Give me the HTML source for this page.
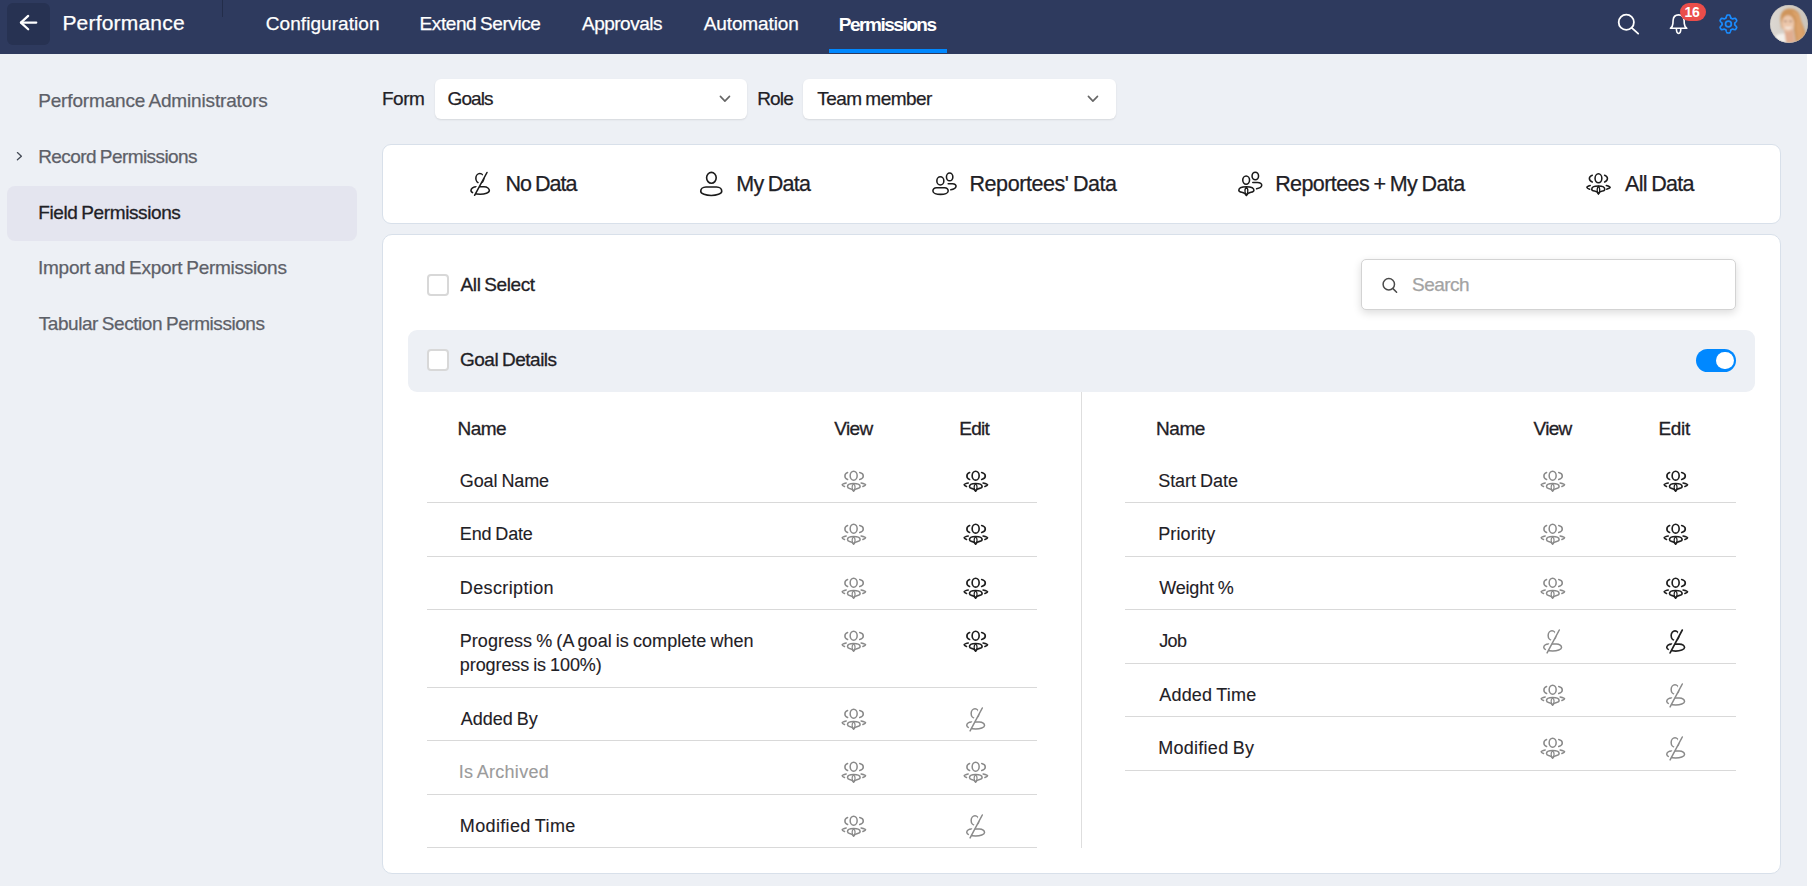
<!DOCTYPE html>
<html><head><meta charset="utf-8"><title>Performance - Permissions</title>
<style>
html,body{margin:0;padding:0;}
body{width:1812px;height:886px;overflow:hidden;position:relative;background:#ffffff;font-family:"Liberation Sans",sans-serif;}
.bg{position:absolute;left:0;top:54px;width:1807px;height:832px;background:#edf0f5;}
.hdr{position:absolute;left:0;top:0;width:1812px;height:54px;background:#2e3a5e;}
.t{position:absolute;white-space:pre;}
.ic{position:absolute;overflow:visible;}
.box{position:absolute;box-sizing:border-box;}
</style></head>
<body>
<div class="bg"></div>
<div class="hdr"></div>
<!-- back button -->
<div class="box" style="left:7px;top:3px;width:43px;height:42px;background:#273252;border-radius:6px;"></div>
<svg class="ic" style="left:15px;top:10px" width="28" height="28" viewBox="0 0 28 28" fill="none" stroke="#fff" stroke-width="2.2" stroke-linecap="round" stroke-linejoin="round">
<path d="M6 12.6H21.3"/><path d="M13.2 5.9L5.9 12.6L13.2 19.3"/></svg>
<div class="box" style="left:222px;top:0;width:1px;height:17px;background:#232d4a;"></div>
<!-- nav underline -->
<div class="box" style="left:829px;top:49px;width:118px;height:4px;background:#0088ff;"></div>
<!-- header right icons -->
<svg class="ic" style="left:1614px;top:10px" width="28" height="28" viewBox="0 0 28 28" fill="none" stroke="#fff" stroke-width="1.8" stroke-linecap="round">
<circle cx="12.3" cy="12.2" r="7.6"/><path d="M17.8 17.8L24.2 23.6"/></svg>
<svg class="ic" style="left:1666px;top:11px" width="26" height="26" viewBox="0 0 26 26" fill="none" stroke="#fff" stroke-width="1.6" stroke-linejoin="round">
<path d="M4.4 17.3C5.8 16.2 6.8 14.8 6.9 12.6L7.1 9.4C7.3 5.8 9.4 3.9 12.6 3.9C15.8 3.9 17.9 5.8 18.1 9.4L18.3 12.6C18.4 14.8 19.4 16.2 20.8 17.3Z"/>
<path d="M10.4 17.6C10.4 20.9 11.4 22.5 12.6 22.5C13.8 22.5 14.8 20.9 14.8 17.6"/></svg>
<div class="box" style="left:1680px;top:3px;width:26px;height:18px;background:#ea4d4a;border-radius:9px;"></div>
<div class="t" style="left:1684.6px;top:2.6px;font-size:14px;line-height:18px;font-weight:bold;color:#fff;letter-spacing:-0.4px;">16</div>
<svg class="ic" style="left:1712px;top:8px" width="34" height="34" viewBox="1712 8 34 34" fill="none" stroke="#1a8cff" stroke-width="1.7" stroke-linejoin="round">
<path d="M1734.80 24.00 L1734.80 23.83 L1734.79 23.67 L1734.78 23.50 L1734.76 23.33 L1734.75 23.16 L1734.87 22.97 L1735.10 22.76 L1735.34 22.52 L1735.59 22.27 L1735.84 22.01 L1736.08 21.73 L1736.30 21.43 L1736.49 21.13 L1736.66 20.83 L1736.71 20.56 L1736.62 20.34 L1736.52 20.13 L1736.42 19.91 L1736.31 19.71 L1736.19 19.50 L1736.07 19.30 L1735.95 19.10 L1735.82 18.90 L1735.68 18.71 L1735.54 18.52 L1735.27 18.43 L1734.93 18.42 L1734.57 18.44 L1734.21 18.49 L1733.84 18.56 L1733.49 18.64 L1733.15 18.73 L1732.83 18.82 L1732.52 18.91 L1732.30 18.92 L1732.16 18.82 L1732.02 18.73 L1731.89 18.63 L1731.74 18.54 L1731.60 18.46 L1731.45 18.38 L1731.31 18.30 L1731.16 18.22 L1731.00 18.15 L1730.85 18.09 L1730.75 17.88 L1730.67 17.58 L1730.59 17.25 L1730.50 16.91 L1730.39 16.56 L1730.27 16.22 L1730.13 15.88 L1729.96 15.56 L1729.78 15.26 L1729.57 15.08 L1729.34 15.05 L1729.11 15.03 L1728.87 15.01 L1728.64 15.00 L1728.40 15.00 L1728.16 15.00 L1727.93 15.01 L1727.69 15.03 L1727.46 15.05 L1727.23 15.08 L1727.02 15.26 L1726.84 15.56 L1726.67 15.88 L1726.53 16.22 L1726.41 16.56 L1726.30 16.91 L1726.21 17.25 L1726.13 17.58 L1726.05 17.88 L1725.95 18.09 L1725.80 18.15 L1725.64 18.22 L1725.49 18.30 L1725.35 18.38 L1725.20 18.46 L1725.06 18.54 L1724.91 18.63 L1724.78 18.73 L1724.64 18.82 L1724.50 18.92 L1724.28 18.91 L1723.97 18.82 L1723.65 18.73 L1723.31 18.64 L1722.96 18.56 L1722.59 18.49 L1722.23 18.44 L1721.87 18.42 L1721.53 18.43 L1721.26 18.52 L1721.12 18.71 L1720.98 18.90 L1720.85 19.10 L1720.73 19.30 L1720.61 19.50 L1720.49 19.71 L1720.38 19.91 L1720.28 20.13 L1720.18 20.34 L1720.09 20.56 L1720.14 20.83 L1720.31 21.13 L1720.50 21.43 L1720.72 21.73 L1720.96 22.01 L1721.21 22.27 L1721.46 22.52 L1721.70 22.76 L1721.93 22.97 L1722.05 23.16 L1722.04 23.33 L1722.02 23.50 L1722.01 23.67 L1722.00 23.83 L1722.00 24.00 L1722.00 24.17 L1722.01 24.33 L1722.02 24.50 L1722.04 24.67 L1722.05 24.84 L1721.93 25.03 L1721.70 25.24 L1721.46 25.48 L1721.21 25.73 L1720.96 25.99 L1720.72 26.27 L1720.50 26.57 L1720.31 26.87 L1720.14 27.17 L1720.09 27.44 L1720.18 27.66 L1720.28 27.87 L1720.38 28.09 L1720.49 28.29 L1720.61 28.50 L1720.73 28.70 L1720.85 28.90 L1720.98 29.10 L1721.12 29.29 L1721.26 29.48 L1721.53 29.57 L1721.87 29.58 L1722.23 29.56 L1722.59 29.51 L1722.96 29.44 L1723.31 29.36 L1723.65 29.27 L1723.97 29.18 L1724.28 29.09 L1724.50 29.08 L1724.64 29.18 L1724.78 29.27 L1724.91 29.37 L1725.06 29.46 L1725.20 29.54 L1725.35 29.62 L1725.49 29.70 L1725.64 29.78 L1725.80 29.85 L1725.95 29.91 L1726.05 30.12 L1726.13 30.42 L1726.21 30.75 L1726.30 31.09 L1726.41 31.44 L1726.53 31.78 L1726.67 32.12 L1726.84 32.44 L1727.02 32.74 L1727.23 32.92 L1727.46 32.95 L1727.69 32.97 L1727.93 32.99 L1728.16 33.00 L1728.40 33.00 L1728.64 33.00 L1728.87 32.99 L1729.11 32.97 L1729.34 32.95 L1729.57 32.92 L1729.78 32.74 L1729.96 32.44 L1730.13 32.12 L1730.27 31.78 L1730.39 31.44 L1730.50 31.09 L1730.59 30.75 L1730.67 30.42 L1730.75 30.12 L1730.85 29.91 L1731.00 29.85 L1731.16 29.78 L1731.31 29.70 L1731.45 29.62 L1731.60 29.54 L1731.74 29.46 L1731.89 29.37 L1732.02 29.27 L1732.16 29.18 L1732.30 29.08 L1732.52 29.09 L1732.83 29.18 L1733.15 29.27 L1733.49 29.36 L1733.84 29.44 L1734.21 29.51 L1734.57 29.56 L1734.93 29.58 L1735.27 29.57 L1735.54 29.48 L1735.68 29.29 L1735.82 29.10 L1735.95 28.90 L1736.07 28.70 L1736.19 28.50 L1736.31 28.29 L1736.42 28.09 L1736.52 27.87 L1736.62 27.66 L1736.71 27.44 L1736.66 27.17 L1736.49 26.87 L1736.30 26.57 L1736.08 26.27 L1735.84 25.99 L1735.59 25.73 L1735.34 25.48 L1735.10 25.24 L1734.87 25.03 L1734.75 24.84 L1734.76 24.67 L1734.78 24.50 L1734.79 24.33 L1734.80 24.17Z"/>
<circle cx="1728.4" cy="24" r="2.9"/></svg>
<!-- avatar -->
<svg class="ic" style="left:1770px;top:5px" width="38" height="38" viewBox="0 0 38 38">
<defs><clipPath id="avc"><circle cx="19" cy="19" r="19"/></clipPath>
<filter id="avb" x="-20%" y="-20%" width="140%" height="140%"><feGaussianBlur stdDeviation="1"/></filter>
<linearGradient id="avg" x1="0" y1="0" x2="1" y2="0"><stop offset="0" stop-color="#dcd8d2"/><stop offset="1" stop-color="#cbc4bb"/></linearGradient></defs>
<g clip-path="url(#avc)">
<rect x="0" y="0" width="38" height="38" fill="url(#avg)"/>
<g filter="url(#avb)">
<path d="M10.5 15C10 7 14.5 3.5 19.5 3.5C25 3.5 29 6.5 30 11.5C31 17 35 24 36 30L35 38H26L24 25C24 18 23 13 19.5 11C16 11.5 13.5 15 13 20L12.5 25C11 22 10.7 18.5 10.5 15Z" fill="#cf955c"/>
<path d="M3 38L5.5 31C9 28.5 13 28 16 29L19 38Z" fill="#f3f0eb"/>
<path d="M14 23C16.5 27 20 27 23 23L25 38H16Z" fill="#e0ad90"/>
<ellipse cx="18" cy="18.5" rx="6.3" ry="8.3" fill="#ecc7ab"/>
<path d="M14.2 16.3h2.4M19.4 16.3h2.4" stroke="#7a5544" stroke-width="1"/>
<path d="M15.4 22.2Q18.2 24.2 21 22.2" stroke="#fbf6f3" stroke-width="1.5" fill="none"/>
<path d="M22.5 8C26 10.5 27.5 15 26 20C25.5 26 28 32 27 38H35C35 30 32 22 30.5 14.5C29.5 9.5 27 7 22.5 6Z" fill="#dca36c"/>
</g></g>
<circle cx="19" cy="19" r="18.6" fill="none" stroke="#b7b2ad" stroke-width="0.6" opacity="0.6"/>
</svg>

<!-- sidebar -->
<div class="box" style="left:7px;top:186px;width:350px;height:55px;background:#e4e5ef;border-radius:8px;"></div>
<svg class="ic" style="left:14px;top:150px" width="12" height="12" viewBox="0 0 12 12" fill="none" stroke="#444a55" stroke-width="1.3" stroke-linecap="round" stroke-linejoin="round">
<path d="M3.4 2.6L7.4 6.3L3.4 9.8"/></svg>

<!-- form / role dropdowns -->
<div class="box" style="left:435px;top:79px;width:312px;height:40px;background:#fff;border-radius:6px;box-shadow:0 1px 2px rgba(0,0,0,0.10);"></div>
<div class="box" style="left:803px;top:79px;width:313px;height:40px;background:#fff;border-radius:6px;box-shadow:0 1px 2px rgba(0,0,0,0.10);"></div>
<svg class="ic" style="left:717px;top:92px" width="16" height="14" viewBox="0 0 16 14" fill="none" stroke="#666666" stroke-width="1.6" stroke-linecap="round" stroke-linejoin="round">
<path d="M3.4 4.4L7.9 9.1L12.5 4.4"/></svg>
<svg class="ic" style="left:1085px;top:92px" width="16" height="14" viewBox="0 0 16 14" fill="none" stroke="#666666" stroke-width="1.6" stroke-linecap="round" stroke-linejoin="round">
<path d="M3.4 4.4L7.9 9.1L12.5 4.4"/></svg>

<!-- tabs box -->
<div class="box" style="left:382px;top:144px;width:1399px;height:80px;background:#fff;border:1px solid #d8e0ea;border-radius:9px;"></div>
<!-- main card -->
<div class="box" style="left:382px;top:234px;width:1399px;height:640px;background:#fff;border:1px solid #d8e0ea;border-radius:10px;"></div>

<!-- tab icons -->
<svg class="ic" style="left:466px;top:168px" width="30" height="32" viewBox="466 168 30 32" fill="none" stroke="#1b1b1b" stroke-width="1.55" stroke-linecap="round">
<ellipse cx="479.85" cy="178.3" rx="4" ry="4.85"/>
<path d="M476.5 186.75H484C487.4 186.75 489.35 188.8 489.35 190.6C489.35 192.9 484.8 194.25 480.15 194.25C475.5 194.25 470.95 192.9 470.95 190.6C470.95 188.6 473.3 186.75 476.5 186.75Z"/>
<path d="M486.7 170.6L473.3 195.4" stroke="#fff" stroke-width="2.8" stroke-linecap="butt"/>
<path d="M487 172.5L474.6 195.3"/>
</svg>
<svg class="ic" style="left:690px;top:160px" width="40" height="40" viewBox="690 160 40 40" fill="none" stroke="#1b1b1b" stroke-width="1.6">
<ellipse cx="711.4" cy="177.8" rx="4.8" ry="5.4"/>
<path d="M706 187.05H716.5C720 187.05 721.75 189.3 721.75 191.3C721.75 193.8 716.6 195.55 711.25 195.55C705.9 195.55 700.75 193.8 700.75 191.3C700.75 189.3 702.5 187.05 706 187.05Z"/>
</svg>
<svg class="ic" style="left:928px;top:168px" width="34" height="32" viewBox="928 168 34 32" fill="none" stroke="#1b1b1b" stroke-width="1.55" stroke-linecap="round">
<ellipse cx="940.35" cy="180.9" rx="3.5" ry="4.1"/>
<ellipse cx="949.65" cy="176.9" rx="3.2" ry="3.9"/>
<path d="M936.5 187.7H944.6C947 187.7 948.2 189.6 948.2 191C948.2 193 944.6 194.35 940.55 194.35C936.5 194.35 932.9 193 932.9 191C932.9 189.6 934.1 187.7 936.5 187.7Z"/>
<path d="M948.2 183.7H952.4C957.6 183.9 957.4 188.8 950.8 189.8"/>
</svg>
<svg class="ic" style="left:1234px;top:168px" width="34" height="32" viewBox="1234 168 34 32" fill="none" stroke="#1b1b1b" stroke-width="1.55" stroke-linecap="round" stroke-linejoin="round">
<ellipse cx="1246.15" cy="180.1" rx="3.4" ry="4.15"/>
<ellipse cx="1255.3" cy="175.95" rx="3.25" ry="3.8"/>
<path d="M1252.8 182.5H1257.4C1263.4 182.7 1263.2 187.6 1256.6 188.8"/>
<path d="M1246.4 195.4C1245.8 193.8 1244 192.5 1241.8 192.2C1239.9 191.9 1238.8 191.2 1238.8 190.2C1238.8 188 1242 186.75 1246.4 186.75C1250.8 186.75 1253.9 188 1253.9 190.2C1253.9 191.2 1252.9 191.9 1251 192.2C1248.8 192.5 1247 193.8 1246.4 195.4Z"/>
<path d="M1246.4 186.9C1244.5 189 1244.5 193.2 1246.4 195.2C1248.3 193.2 1248.3 189 1246.4 186.9Z" stroke-width="1.3"/>
</svg>
<svg class="ic" style="left:1582px;top:168px" width="34" height="32" viewBox="1582 168 34 32" fill="none" stroke="#1b1b1b" stroke-width="1.55" stroke-linecap="round" stroke-linejoin="round">
<ellipse cx="1598.45" cy="178.3" rx="3.4" ry="4.5"/>
<path d="M1592.3 175.2C1588.4 176.6 1588.4 180.6 1592.3 182"/><path d="M1604.6 175.2C1608.4 176.6 1608.4 180.6 1604.6 182"/>
<path d="M1590.2 185.6C1588.6 186 1586.9 186.9 1586.9 187.5C1587 188.2 1588.4 188.8 1589.6 189.2"/>
<path d="M1606.3 185.6C1607.9 186 1610.15 186.9 1610.15 187.5C1610 188.2 1608 188.8 1606.8 189.2"/>
<path d="M1598.45 194C1597.9 192.6 1596.4 191.4 1594.5 191.1C1592.7 190.8 1591.75 190.1 1591.75 189.2C1591.75 187.2 1594.8 186.05 1598.45 186.05C1602.1 186.05 1604.75 187.2 1604.75 189.2C1604.75 190.1 1604 190.8 1602.4 191.1C1600.5 191.4 1599 192.6 1598.45 194Z"/>
<path d="M1598.45 186.2C1596.7 188.2 1596.7 191.8 1598.45 193.8C1600.2 191.8 1600.2 188.2 1598.45 186.2Z" stroke-width="1.3"/>
</svg>

<!-- All select row -->
<div class="box" style="left:427px;top:274px;width:22px;height:22px;border:2px solid #d8d8d8;border-radius:4px;background:#fff;"></div>
<div class="box" style="left:1361px;top:259px;width:374.5px;height:51px;border:1px solid #d3d3d3;border-radius:5px;background:#fff;box-shadow:0 3px 8px rgba(0,0,0,0.14);"></div>
<svg class="ic" style="left:1378px;top:274px" width="24" height="24" viewBox="1378 274 24 24" fill="none" stroke="#4a4a4a" stroke-width="1.5" stroke-linecap="round">
<circle cx="1388.8" cy="284.2" r="5.7"/><path d="M1393 288.6L1396.6 292.2"/></svg>

<!-- Goal details section -->
<div class="box" style="left:408px;top:330px;width:1347px;height:62px;background:#edf0f5;border-radius:9px;"></div>
<div class="box" style="left:427px;top:348.5px;width:22px;height:22px;border:2px solid #d8d8d8;border-radius:4px;background:#fff;"></div>
<div class="box" style="left:1696px;top:349px;width:40px;height:23px;background:#0088ff;border-radius:12px;"></div>
<div class="box" style="left:1716.2px;top:351.8px;width:17.6px;height:17.6px;background:#fff;border-radius:50%;"></div>

<!-- table lines -->
<div class="box" style="left:1081px;top:392px;width:1px;height:456px;background:#dedede;"></div>
<div class="box" style="left:427px;top:502px;width:610px;height:1px;background:#d9d9d9;"></div>
<div class="box" style="left:427px;top:556px;width:610px;height:1px;background:#d9d9d9;"></div>
<div class="box" style="left:427px;top:609px;width:610px;height:1px;background:#d9d9d9;"></div>
<div class="box" style="left:427px;top:687px;width:610px;height:1px;background:#d9d9d9;"></div>
<div class="box" style="left:427px;top:740px;width:610px;height:1px;background:#d9d9d9;"></div>
<div class="box" style="left:427px;top:794px;width:610px;height:1px;background:#d9d9d9;"></div>
<div class="box" style="left:427px;top:847px;width:610px;height:1px;background:#d9d9d9;"></div>
<div class="box" style="left:1125px;top:502px;width:611px;height:1px;background:#d9d9d9;"></div>
<div class="box" style="left:1125px;top:556px;width:611px;height:1px;background:#d9d9d9;"></div>
<div class="box" style="left:1125px;top:609px;width:611px;height:1px;background:#d9d9d9;"></div>
<div class="box" style="left:1125px;top:663px;width:611px;height:1px;background:#d9d9d9;"></div>
<div class="box" style="left:1125px;top:716px;width:611px;height:1px;background:#d9d9d9;"></div>
<div class="box" style="left:1125px;top:770px;width:611px;height:1px;background:#d9d9d9;"></div>

<svg class="ic" style="left:841.2px;top:468.7px" width="26" height="24" viewBox="0 0 26 24" fill="none" stroke="#8a8a8a" stroke-width="1.5" stroke-linecap="round" stroke-linejoin="round">
<ellipse cx="12.65" cy="6.7" rx="3.5" ry="4.45"/>
<path d="M6.6 3.5C3 4.8 3 9.2 6.6 10.5"/><path d="M18.7 3.5C23.5 4.8 23.5 9.2 18.7 10.5"/>
<path d="M5.2 14C3.4 14.4 1.2 15.2 1.2 15.8C1.2 16.5 2.4 17.1 3.5 17.5"/><path d="M20.1 14C21.9 14.4 24.6 15.2 24.6 15.8C24.6 16.5 23 17.1 21.9 17.5"/>
<path d="M12.6 22.2C12 20.8 10.5 19.7 8.6 19.4C7.2 19.1 6.5 18.4 6.5 17.5C6.5 15.6 9.4 14.5 12.6 14.5C15.8 14.5 19.1 15.6 19.1 17.5C19.1 18.4 18.3 19.1 16.6 19.4C14.7 19.7 13.2 20.8 12.6 22.2Z"/>
<path d="M12.6 14.6C10.9 16.6 10.9 19.8 12.6 22C14.3 19.8 14.3 16.6 12.6 14.6Z" stroke-width="1.25"/>
</svg>
<svg class="ic" style="left:963.0px;top:468.7px" width="26" height="24" viewBox="0 0 26 24" fill="none" stroke="#1f1f1f" stroke-width="1.65" stroke-linecap="round" stroke-linejoin="round">
<ellipse cx="12.65" cy="6.7" rx="3.5" ry="4.45"/>
<path d="M6.6 3.5C3 4.8 3 9.2 6.6 10.5"/><path d="M18.7 3.5C23.5 4.8 23.5 9.2 18.7 10.5"/>
<path d="M5.2 14C3.4 14.4 1.2 15.2 1.2 15.8C1.2 16.5 2.4 17.1 3.5 17.5"/><path d="M20.1 14C21.9 14.4 24.6 15.2 24.6 15.8C24.6 16.5 23 17.1 21.9 17.5"/>
<path d="M12.6 22.2C12 20.8 10.5 19.7 8.6 19.4C7.2 19.1 6.5 18.4 6.5 17.5C6.5 15.6 9.4 14.5 12.6 14.5C15.8 14.5 19.1 15.6 19.1 17.5C19.1 18.4 18.3 19.1 16.6 19.4C14.7 19.7 13.2 20.8 12.6 22.2Z"/>
<path d="M12.6 14.6C10.9 16.6 10.9 19.8 12.6 22C14.3 19.8 14.3 16.6 12.6 14.6Z" stroke-width="1.25"/>
</svg>
<svg class="ic" style="left:841.2px;top:522.1px" width="26" height="24" viewBox="0 0 26 24" fill="none" stroke="#8a8a8a" stroke-width="1.5" stroke-linecap="round" stroke-linejoin="round">
<ellipse cx="12.65" cy="6.7" rx="3.5" ry="4.45"/>
<path d="M6.6 3.5C3 4.8 3 9.2 6.6 10.5"/><path d="M18.7 3.5C23.5 4.8 23.5 9.2 18.7 10.5"/>
<path d="M5.2 14C3.4 14.4 1.2 15.2 1.2 15.8C1.2 16.5 2.4 17.1 3.5 17.5"/><path d="M20.1 14C21.9 14.4 24.6 15.2 24.6 15.8C24.6 16.5 23 17.1 21.9 17.5"/>
<path d="M12.6 22.2C12 20.8 10.5 19.7 8.6 19.4C7.2 19.1 6.5 18.4 6.5 17.5C6.5 15.6 9.4 14.5 12.6 14.5C15.8 14.5 19.1 15.6 19.1 17.5C19.1 18.4 18.3 19.1 16.6 19.4C14.7 19.7 13.2 20.8 12.6 22.2Z"/>
<path d="M12.6 14.6C10.9 16.6 10.9 19.8 12.6 22C14.3 19.8 14.3 16.6 12.6 14.6Z" stroke-width="1.25"/>
</svg>
<svg class="ic" style="left:963.0px;top:522.1px" width="26" height="24" viewBox="0 0 26 24" fill="none" stroke="#1f1f1f" stroke-width="1.65" stroke-linecap="round" stroke-linejoin="round">
<ellipse cx="12.65" cy="6.7" rx="3.5" ry="4.45"/>
<path d="M6.6 3.5C3 4.8 3 9.2 6.6 10.5"/><path d="M18.7 3.5C23.5 4.8 23.5 9.2 18.7 10.5"/>
<path d="M5.2 14C3.4 14.4 1.2 15.2 1.2 15.8C1.2 16.5 2.4 17.1 3.5 17.5"/><path d="M20.1 14C21.9 14.4 24.6 15.2 24.6 15.8C24.6 16.5 23 17.1 21.9 17.5"/>
<path d="M12.6 22.2C12 20.8 10.5 19.7 8.6 19.4C7.2 19.1 6.5 18.4 6.5 17.5C6.5 15.6 9.4 14.5 12.6 14.5C15.8 14.5 19.1 15.6 19.1 17.5C19.1 18.4 18.3 19.1 16.6 19.4C14.7 19.7 13.2 20.8 12.6 22.2Z"/>
<path d="M12.6 14.6C10.9 16.6 10.9 19.8 12.6 22C14.3 19.8 14.3 16.6 12.6 14.6Z" stroke-width="1.25"/>
</svg>
<svg class="ic" style="left:841.2px;top:575.7px" width="26" height="24" viewBox="0 0 26 24" fill="none" stroke="#8a8a8a" stroke-width="1.5" stroke-linecap="round" stroke-linejoin="round">
<ellipse cx="12.65" cy="6.7" rx="3.5" ry="4.45"/>
<path d="M6.6 3.5C3 4.8 3 9.2 6.6 10.5"/><path d="M18.7 3.5C23.5 4.8 23.5 9.2 18.7 10.5"/>
<path d="M5.2 14C3.4 14.4 1.2 15.2 1.2 15.8C1.2 16.5 2.4 17.1 3.5 17.5"/><path d="M20.1 14C21.9 14.4 24.6 15.2 24.6 15.8C24.6 16.5 23 17.1 21.9 17.5"/>
<path d="M12.6 22.2C12 20.8 10.5 19.7 8.6 19.4C7.2 19.1 6.5 18.4 6.5 17.5C6.5 15.6 9.4 14.5 12.6 14.5C15.8 14.5 19.1 15.6 19.1 17.5C19.1 18.4 18.3 19.1 16.6 19.4C14.7 19.7 13.2 20.8 12.6 22.2Z"/>
<path d="M12.6 14.6C10.9 16.6 10.9 19.8 12.6 22C14.3 19.8 14.3 16.6 12.6 14.6Z" stroke-width="1.25"/>
</svg>
<svg class="ic" style="left:963.0px;top:575.7px" width="26" height="24" viewBox="0 0 26 24" fill="none" stroke="#1f1f1f" stroke-width="1.65" stroke-linecap="round" stroke-linejoin="round">
<ellipse cx="12.65" cy="6.7" rx="3.5" ry="4.45"/>
<path d="M6.6 3.5C3 4.8 3 9.2 6.6 10.5"/><path d="M18.7 3.5C23.5 4.8 23.5 9.2 18.7 10.5"/>
<path d="M5.2 14C3.4 14.4 1.2 15.2 1.2 15.8C1.2 16.5 2.4 17.1 3.5 17.5"/><path d="M20.1 14C21.9 14.4 24.6 15.2 24.6 15.8C24.6 16.5 23 17.1 21.9 17.5"/>
<path d="M12.6 22.2C12 20.8 10.5 19.7 8.6 19.4C7.2 19.1 6.5 18.4 6.5 17.5C6.5 15.6 9.4 14.5 12.6 14.5C15.8 14.5 19.1 15.6 19.1 17.5C19.1 18.4 18.3 19.1 16.6 19.4C14.7 19.7 13.2 20.8 12.6 22.2Z"/>
<path d="M12.6 14.6C10.9 16.6 10.9 19.8 12.6 22C14.3 19.8 14.3 16.6 12.6 14.6Z" stroke-width="1.25"/>
</svg>
<svg class="ic" style="left:841.2px;top:628.9px" width="26" height="24" viewBox="0 0 26 24" fill="none" stroke="#8a8a8a" stroke-width="1.5" stroke-linecap="round" stroke-linejoin="round">
<ellipse cx="12.65" cy="6.7" rx="3.5" ry="4.45"/>
<path d="M6.6 3.5C3 4.8 3 9.2 6.6 10.5"/><path d="M18.7 3.5C23.5 4.8 23.5 9.2 18.7 10.5"/>
<path d="M5.2 14C3.4 14.4 1.2 15.2 1.2 15.8C1.2 16.5 2.4 17.1 3.5 17.5"/><path d="M20.1 14C21.9 14.4 24.6 15.2 24.6 15.8C24.6 16.5 23 17.1 21.9 17.5"/>
<path d="M12.6 22.2C12 20.8 10.5 19.7 8.6 19.4C7.2 19.1 6.5 18.4 6.5 17.5C6.5 15.6 9.4 14.5 12.6 14.5C15.8 14.5 19.1 15.6 19.1 17.5C19.1 18.4 18.3 19.1 16.6 19.4C14.7 19.7 13.2 20.8 12.6 22.2Z"/>
<path d="M12.6 14.6C10.9 16.6 10.9 19.8 12.6 22C14.3 19.8 14.3 16.6 12.6 14.6Z" stroke-width="1.25"/>
</svg>
<svg class="ic" style="left:963.0px;top:628.9px" width="26" height="24" viewBox="0 0 26 24" fill="none" stroke="#1f1f1f" stroke-width="1.65" stroke-linecap="round" stroke-linejoin="round">
<ellipse cx="12.65" cy="6.7" rx="3.5" ry="4.45"/>
<path d="M6.6 3.5C3 4.8 3 9.2 6.6 10.5"/><path d="M18.7 3.5C23.5 4.8 23.5 9.2 18.7 10.5"/>
<path d="M5.2 14C3.4 14.4 1.2 15.2 1.2 15.8C1.2 16.5 2.4 17.1 3.5 17.5"/><path d="M20.1 14C21.9 14.4 24.6 15.2 24.6 15.8C24.6 16.5 23 17.1 21.9 17.5"/>
<path d="M12.6 22.2C12 20.8 10.5 19.7 8.6 19.4C7.2 19.1 6.5 18.4 6.5 17.5C6.5 15.6 9.4 14.5 12.6 14.5C15.8 14.5 19.1 15.6 19.1 17.5C19.1 18.4 18.3 19.1 16.6 19.4C14.7 19.7 13.2 20.8 12.6 22.2Z"/>
<path d="M12.6 14.6C10.9 16.6 10.9 19.8 12.6 22C14.3 19.8 14.3 16.6 12.6 14.6Z" stroke-width="1.25"/>
</svg>
<svg class="ic" style="left:841.2px;top:707.0px" width="26" height="24" viewBox="0 0 26 24" fill="none" stroke="#8a8a8a" stroke-width="1.5" stroke-linecap="round" stroke-linejoin="round">
<ellipse cx="12.65" cy="6.7" rx="3.5" ry="4.45"/>
<path d="M6.6 3.5C3 4.8 3 9.2 6.6 10.5"/><path d="M18.7 3.5C23.5 4.8 23.5 9.2 18.7 10.5"/>
<path d="M5.2 14C3.4 14.4 1.2 15.2 1.2 15.8C1.2 16.5 2.4 17.1 3.5 17.5"/><path d="M20.1 14C21.9 14.4 24.6 15.2 24.6 15.8C24.6 16.5 23 17.1 21.9 17.5"/>
<path d="M12.6 22.2C12 20.8 10.5 19.7 8.6 19.4C7.2 19.1 6.5 18.4 6.5 17.5C6.5 15.6 9.4 14.5 12.6 14.5C15.8 14.5 19.1 15.6 19.1 17.5C19.1 18.4 18.3 19.1 16.6 19.4C14.7 19.7 13.2 20.8 12.6 22.2Z"/>
<path d="M12.6 14.6C10.9 16.6 10.9 19.8 12.6 22C14.3 19.8 14.3 16.6 12.6 14.6Z" stroke-width="1.25"/>
</svg>
<svg class="ic" style="left:962.9px;top:704.7px" width="26" height="28" viewBox="0 0 26 28" fill="none" stroke="#8a8a8a" stroke-width="1.5" stroke-linecap="round">
<ellipse cx="12.0" cy="8.55" rx="3.85" ry="4.7"/>
<path d="M8.6 17.05H16.4C19.6 17.05 21.55 19 21.55 20.55C21.55 22.6 17.2 24.05 12.65 24.05C8.1 24.05 3.75 22.6 3.75 20.55C3.75 18.8 5.6 17.05 8.6 17.05Z"/>
<path d="M18.95 1.2L5.7 26" stroke="#fff" stroke-width="2.8" stroke-linecap="butt"/>
<path d="M19.3 3.0L7.1 25.9"/>
</svg>
<svg class="ic" style="left:841.2px;top:759.9px" width="26" height="24" viewBox="0 0 26 24" fill="none" stroke="#8a8a8a" stroke-width="1.5" stroke-linecap="round" stroke-linejoin="round">
<ellipse cx="12.65" cy="6.7" rx="3.5" ry="4.45"/>
<path d="M6.6 3.5C3 4.8 3 9.2 6.6 10.5"/><path d="M18.7 3.5C23.5 4.8 23.5 9.2 18.7 10.5"/>
<path d="M5.2 14C3.4 14.4 1.2 15.2 1.2 15.8C1.2 16.5 2.4 17.1 3.5 17.5"/><path d="M20.1 14C21.9 14.4 24.6 15.2 24.6 15.8C24.6 16.5 23 17.1 21.9 17.5"/>
<path d="M12.6 22.2C12 20.8 10.5 19.7 8.6 19.4C7.2 19.1 6.5 18.4 6.5 17.5C6.5 15.6 9.4 14.5 12.6 14.5C15.8 14.5 19.1 15.6 19.1 17.5C19.1 18.4 18.3 19.1 16.6 19.4C14.7 19.7 13.2 20.8 12.6 22.2Z"/>
<path d="M12.6 14.6C10.9 16.6 10.9 19.8 12.6 22C14.3 19.8 14.3 16.6 12.6 14.6Z" stroke-width="1.25"/>
</svg>
<svg class="ic" style="left:963.0px;top:759.9px" width="26" height="24" viewBox="0 0 26 24" fill="none" stroke="#8a8a8a" stroke-width="1.5" stroke-linecap="round" stroke-linejoin="round">
<ellipse cx="12.65" cy="6.7" rx="3.5" ry="4.45"/>
<path d="M6.6 3.5C3 4.8 3 9.2 6.6 10.5"/><path d="M18.7 3.5C23.5 4.8 23.5 9.2 18.7 10.5"/>
<path d="M5.2 14C3.4 14.4 1.2 15.2 1.2 15.8C1.2 16.5 2.4 17.1 3.5 17.5"/><path d="M20.1 14C21.9 14.4 24.6 15.2 24.6 15.8C24.6 16.5 23 17.1 21.9 17.5"/>
<path d="M12.6 22.2C12 20.8 10.5 19.7 8.6 19.4C7.2 19.1 6.5 18.4 6.5 17.5C6.5 15.6 9.4 14.5 12.6 14.5C15.8 14.5 19.1 15.6 19.1 17.5C19.1 18.4 18.3 19.1 16.6 19.4C14.7 19.7 13.2 20.8 12.6 22.2Z"/>
<path d="M12.6 14.6C10.9 16.6 10.9 19.8 12.6 22C14.3 19.8 14.3 16.6 12.6 14.6Z" stroke-width="1.25"/>
</svg>
<svg class="ic" style="left:841.2px;top:813.9px" width="26" height="24" viewBox="0 0 26 24" fill="none" stroke="#8a8a8a" stroke-width="1.5" stroke-linecap="round" stroke-linejoin="round">
<ellipse cx="12.65" cy="6.7" rx="3.5" ry="4.45"/>
<path d="M6.6 3.5C3 4.8 3 9.2 6.6 10.5"/><path d="M18.7 3.5C23.5 4.8 23.5 9.2 18.7 10.5"/>
<path d="M5.2 14C3.4 14.4 1.2 15.2 1.2 15.8C1.2 16.5 2.4 17.1 3.5 17.5"/><path d="M20.1 14C21.9 14.4 24.6 15.2 24.6 15.8C24.6 16.5 23 17.1 21.9 17.5"/>
<path d="M12.6 22.2C12 20.8 10.5 19.7 8.6 19.4C7.2 19.1 6.5 18.4 6.5 17.5C6.5 15.6 9.4 14.5 12.6 14.5C15.8 14.5 19.1 15.6 19.1 17.5C19.1 18.4 18.3 19.1 16.6 19.4C14.7 19.7 13.2 20.8 12.6 22.2Z"/>
<path d="M12.6 14.6C10.9 16.6 10.9 19.8 12.6 22C14.3 19.8 14.3 16.6 12.6 14.6Z" stroke-width="1.25"/>
</svg>
<svg class="ic" style="left:962.9px;top:811.6px" width="26" height="28" viewBox="0 0 26 28" fill="none" stroke="#8a8a8a" stroke-width="1.5" stroke-linecap="round">
<ellipse cx="12.0" cy="8.55" rx="3.85" ry="4.7"/>
<path d="M8.6 17.05H16.4C19.6 17.05 21.55 19 21.55 20.55C21.55 22.6 17.2 24.05 12.65 24.05C8.1 24.05 3.75 22.6 3.75 20.55C3.75 18.8 5.6 17.05 8.6 17.05Z"/>
<path d="M18.95 1.2L5.7 26" stroke="#fff" stroke-width="2.8" stroke-linecap="butt"/>
<path d="M19.3 3.0L7.1 25.9"/>
</svg>
<svg class="ic" style="left:1540.1px;top:468.7px" width="26" height="24" viewBox="0 0 26 24" fill="none" stroke="#8a8a8a" stroke-width="1.5" stroke-linecap="round" stroke-linejoin="round">
<ellipse cx="12.65" cy="6.7" rx="3.5" ry="4.45"/>
<path d="M6.6 3.5C3 4.8 3 9.2 6.6 10.5"/><path d="M18.7 3.5C23.5 4.8 23.5 9.2 18.7 10.5"/>
<path d="M5.2 14C3.4 14.4 1.2 15.2 1.2 15.8C1.2 16.5 2.4 17.1 3.5 17.5"/><path d="M20.1 14C21.9 14.4 24.6 15.2 24.6 15.8C24.6 16.5 23 17.1 21.9 17.5"/>
<path d="M12.6 22.2C12 20.8 10.5 19.7 8.6 19.4C7.2 19.1 6.5 18.4 6.5 17.5C6.5 15.6 9.4 14.5 12.6 14.5C15.8 14.5 19.1 15.6 19.1 17.5C19.1 18.4 18.3 19.1 16.6 19.4C14.7 19.7 13.2 20.8 12.6 22.2Z"/>
<path d="M12.6 14.6C10.9 16.6 10.9 19.8 12.6 22C14.3 19.8 14.3 16.6 12.6 14.6Z" stroke-width="1.25"/>
</svg>
<svg class="ic" style="left:1662.8px;top:468.7px" width="26" height="24" viewBox="0 0 26 24" fill="none" stroke="#1f1f1f" stroke-width="1.65" stroke-linecap="round" stroke-linejoin="round">
<ellipse cx="12.65" cy="6.7" rx="3.5" ry="4.45"/>
<path d="M6.6 3.5C3 4.8 3 9.2 6.6 10.5"/><path d="M18.7 3.5C23.5 4.8 23.5 9.2 18.7 10.5"/>
<path d="M5.2 14C3.4 14.4 1.2 15.2 1.2 15.8C1.2 16.5 2.4 17.1 3.5 17.5"/><path d="M20.1 14C21.9 14.4 24.6 15.2 24.6 15.8C24.6 16.5 23 17.1 21.9 17.5"/>
<path d="M12.6 22.2C12 20.8 10.5 19.7 8.6 19.4C7.2 19.1 6.5 18.4 6.5 17.5C6.5 15.6 9.4 14.5 12.6 14.5C15.8 14.5 19.1 15.6 19.1 17.5C19.1 18.4 18.3 19.1 16.6 19.4C14.7 19.7 13.2 20.8 12.6 22.2Z"/>
<path d="M12.6 14.6C10.9 16.6 10.9 19.8 12.6 22C14.3 19.8 14.3 16.6 12.6 14.6Z" stroke-width="1.25"/>
</svg>
<svg class="ic" style="left:1540.1px;top:522.1px" width="26" height="24" viewBox="0 0 26 24" fill="none" stroke="#8a8a8a" stroke-width="1.5" stroke-linecap="round" stroke-linejoin="round">
<ellipse cx="12.65" cy="6.7" rx="3.5" ry="4.45"/>
<path d="M6.6 3.5C3 4.8 3 9.2 6.6 10.5"/><path d="M18.7 3.5C23.5 4.8 23.5 9.2 18.7 10.5"/>
<path d="M5.2 14C3.4 14.4 1.2 15.2 1.2 15.8C1.2 16.5 2.4 17.1 3.5 17.5"/><path d="M20.1 14C21.9 14.4 24.6 15.2 24.6 15.8C24.6 16.5 23 17.1 21.9 17.5"/>
<path d="M12.6 22.2C12 20.8 10.5 19.7 8.6 19.4C7.2 19.1 6.5 18.4 6.5 17.5C6.5 15.6 9.4 14.5 12.6 14.5C15.8 14.5 19.1 15.6 19.1 17.5C19.1 18.4 18.3 19.1 16.6 19.4C14.7 19.7 13.2 20.8 12.6 22.2Z"/>
<path d="M12.6 14.6C10.9 16.6 10.9 19.8 12.6 22C14.3 19.8 14.3 16.6 12.6 14.6Z" stroke-width="1.25"/>
</svg>
<svg class="ic" style="left:1662.8px;top:522.1px" width="26" height="24" viewBox="0 0 26 24" fill="none" stroke="#1f1f1f" stroke-width="1.65" stroke-linecap="round" stroke-linejoin="round">
<ellipse cx="12.65" cy="6.7" rx="3.5" ry="4.45"/>
<path d="M6.6 3.5C3 4.8 3 9.2 6.6 10.5"/><path d="M18.7 3.5C23.5 4.8 23.5 9.2 18.7 10.5"/>
<path d="M5.2 14C3.4 14.4 1.2 15.2 1.2 15.8C1.2 16.5 2.4 17.1 3.5 17.5"/><path d="M20.1 14C21.9 14.4 24.6 15.2 24.6 15.8C24.6 16.5 23 17.1 21.9 17.5"/>
<path d="M12.6 22.2C12 20.8 10.5 19.7 8.6 19.4C7.2 19.1 6.5 18.4 6.5 17.5C6.5 15.6 9.4 14.5 12.6 14.5C15.8 14.5 19.1 15.6 19.1 17.5C19.1 18.4 18.3 19.1 16.6 19.4C14.7 19.7 13.2 20.8 12.6 22.2Z"/>
<path d="M12.6 14.6C10.9 16.6 10.9 19.8 12.6 22C14.3 19.8 14.3 16.6 12.6 14.6Z" stroke-width="1.25"/>
</svg>
<svg class="ic" style="left:1540.1px;top:575.7px" width="26" height="24" viewBox="0 0 26 24" fill="none" stroke="#8a8a8a" stroke-width="1.5" stroke-linecap="round" stroke-linejoin="round">
<ellipse cx="12.65" cy="6.7" rx="3.5" ry="4.45"/>
<path d="M6.6 3.5C3 4.8 3 9.2 6.6 10.5"/><path d="M18.7 3.5C23.5 4.8 23.5 9.2 18.7 10.5"/>
<path d="M5.2 14C3.4 14.4 1.2 15.2 1.2 15.8C1.2 16.5 2.4 17.1 3.5 17.5"/><path d="M20.1 14C21.9 14.4 24.6 15.2 24.6 15.8C24.6 16.5 23 17.1 21.9 17.5"/>
<path d="M12.6 22.2C12 20.8 10.5 19.7 8.6 19.4C7.2 19.1 6.5 18.4 6.5 17.5C6.5 15.6 9.4 14.5 12.6 14.5C15.8 14.5 19.1 15.6 19.1 17.5C19.1 18.4 18.3 19.1 16.6 19.4C14.7 19.7 13.2 20.8 12.6 22.2Z"/>
<path d="M12.6 14.6C10.9 16.6 10.9 19.8 12.6 22C14.3 19.8 14.3 16.6 12.6 14.6Z" stroke-width="1.25"/>
</svg>
<svg class="ic" style="left:1662.8px;top:575.7px" width="26" height="24" viewBox="0 0 26 24" fill="none" stroke="#1f1f1f" stroke-width="1.65" stroke-linecap="round" stroke-linejoin="round">
<ellipse cx="12.65" cy="6.7" rx="3.5" ry="4.45"/>
<path d="M6.6 3.5C3 4.8 3 9.2 6.6 10.5"/><path d="M18.7 3.5C23.5 4.8 23.5 9.2 18.7 10.5"/>
<path d="M5.2 14C3.4 14.4 1.2 15.2 1.2 15.8C1.2 16.5 2.4 17.1 3.5 17.5"/><path d="M20.1 14C21.9 14.4 24.6 15.2 24.6 15.8C24.6 16.5 23 17.1 21.9 17.5"/>
<path d="M12.6 22.2C12 20.8 10.5 19.7 8.6 19.4C7.2 19.1 6.5 18.4 6.5 17.5C6.5 15.6 9.4 14.5 12.6 14.5C15.8 14.5 19.1 15.6 19.1 17.5C19.1 18.4 18.3 19.1 16.6 19.4C14.7 19.7 13.2 20.8 12.6 22.2Z"/>
<path d="M12.6 14.6C10.9 16.6 10.9 19.8 12.6 22C14.3 19.8 14.3 16.6 12.6 14.6Z" stroke-width="1.25"/>
</svg>
<svg class="ic" style="left:1540.0px;top:626.6px" width="26" height="28" viewBox="0 0 26 28" fill="none" stroke="#8a8a8a" stroke-width="1.5" stroke-linecap="round">
<ellipse cx="12.0" cy="8.55" rx="3.85" ry="4.7"/>
<path d="M8.6 17.05H16.4C19.6 17.05 21.55 19 21.55 20.55C21.55 22.6 17.2 24.05 12.65 24.05C8.1 24.05 3.75 22.6 3.75 20.55C3.75 18.8 5.6 17.05 8.6 17.05Z"/>
<path d="M18.95 1.2L5.7 26" stroke="#fff" stroke-width="2.8" stroke-linecap="butt"/>
<path d="M19.3 3.0L7.1 25.9"/>
</svg>
<svg class="ic" style="left:1662.7px;top:626.6px" width="26" height="28" viewBox="0 0 26 28" fill="none" stroke="#1f1f1f" stroke-width="1.65" stroke-linecap="round">
<ellipse cx="12.0" cy="8.55" rx="3.85" ry="4.7"/>
<path d="M8.6 17.05H16.4C19.6 17.05 21.55 19 21.55 20.55C21.55 22.6 17.2 24.05 12.65 24.05C8.1 24.05 3.75 22.6 3.75 20.55C3.75 18.8 5.6 17.05 8.6 17.05Z"/>
<path d="M18.95 1.2L5.7 26" stroke="#fff" stroke-width="2.8" stroke-linecap="butt"/>
<path d="M19.3 3.0L7.1 25.9"/>
</svg>
<svg class="ic" style="left:1540.1px;top:682.8px" width="26" height="24" viewBox="0 0 26 24" fill="none" stroke="#8a8a8a" stroke-width="1.5" stroke-linecap="round" stroke-linejoin="round">
<ellipse cx="12.65" cy="6.7" rx="3.5" ry="4.45"/>
<path d="M6.6 3.5C3 4.8 3 9.2 6.6 10.5"/><path d="M18.7 3.5C23.5 4.8 23.5 9.2 18.7 10.5"/>
<path d="M5.2 14C3.4 14.4 1.2 15.2 1.2 15.8C1.2 16.5 2.4 17.1 3.5 17.5"/><path d="M20.1 14C21.9 14.4 24.6 15.2 24.6 15.8C24.6 16.5 23 17.1 21.9 17.5"/>
<path d="M12.6 22.2C12 20.8 10.5 19.7 8.6 19.4C7.2 19.1 6.5 18.4 6.5 17.5C6.5 15.6 9.4 14.5 12.6 14.5C15.8 14.5 19.1 15.6 19.1 17.5C19.1 18.4 18.3 19.1 16.6 19.4C14.7 19.7 13.2 20.8 12.6 22.2Z"/>
<path d="M12.6 14.6C10.9 16.6 10.9 19.8 12.6 22C14.3 19.8 14.3 16.6 12.6 14.6Z" stroke-width="1.25"/>
</svg>
<svg class="ic" style="left:1662.7px;top:680.5px" width="26" height="28" viewBox="0 0 26 28" fill="none" stroke="#8a8a8a" stroke-width="1.5" stroke-linecap="round">
<ellipse cx="12.0" cy="8.55" rx="3.85" ry="4.7"/>
<path d="M8.6 17.05H16.4C19.6 17.05 21.55 19 21.55 20.55C21.55 22.6 17.2 24.05 12.65 24.05C8.1 24.05 3.75 22.6 3.75 20.55C3.75 18.8 5.6 17.05 8.6 17.05Z"/>
<path d="M18.95 1.2L5.7 26" stroke="#fff" stroke-width="2.8" stroke-linecap="butt"/>
<path d="M19.3 3.0L7.1 25.9"/>
</svg>
<svg class="ic" style="left:1540.1px;top:736.2px" width="26" height="24" viewBox="0 0 26 24" fill="none" stroke="#8a8a8a" stroke-width="1.5" stroke-linecap="round" stroke-linejoin="round">
<ellipse cx="12.65" cy="6.7" rx="3.5" ry="4.45"/>
<path d="M6.6 3.5C3 4.8 3 9.2 6.6 10.5"/><path d="M18.7 3.5C23.5 4.8 23.5 9.2 18.7 10.5"/>
<path d="M5.2 14C3.4 14.4 1.2 15.2 1.2 15.8C1.2 16.5 2.4 17.1 3.5 17.5"/><path d="M20.1 14C21.9 14.4 24.6 15.2 24.6 15.8C24.6 16.5 23 17.1 21.9 17.5"/>
<path d="M12.6 22.2C12 20.8 10.5 19.7 8.6 19.4C7.2 19.1 6.5 18.4 6.5 17.5C6.5 15.6 9.4 14.5 12.6 14.5C15.8 14.5 19.1 15.6 19.1 17.5C19.1 18.4 18.3 19.1 16.6 19.4C14.7 19.7 13.2 20.8 12.6 22.2Z"/>
<path d="M12.6 14.6C10.9 16.6 10.9 19.8 12.6 22C14.3 19.8 14.3 16.6 12.6 14.6Z" stroke-width="1.25"/>
</svg>
<svg class="ic" style="left:1662.7px;top:733.9px" width="26" height="28" viewBox="0 0 26 28" fill="none" stroke="#8a8a8a" stroke-width="1.5" stroke-linecap="round">
<ellipse cx="12.0" cy="8.55" rx="3.85" ry="4.7"/>
<path d="M8.6 17.05H16.4C19.6 17.05 21.55 19 21.55 20.55C21.55 22.6 17.2 24.05 12.65 24.05C8.1 24.05 3.75 22.6 3.75 20.55C3.75 18.8 5.6 17.05 8.6 17.05Z"/>
<path d="M18.95 1.2L5.7 26" stroke="#fff" stroke-width="2.8" stroke-linecap="butt"/>
<path d="M19.3 3.0L7.1 25.9"/>
</svg>

<div id="t_perf" class="t" style="left:62.40px;top:9.52px;font-size:21.00px;line-height:25px;letter-spacing:0.197px;word-spacing:0.00px;color:#ffffff;font-weight:normal;-webkit-text-stroke:0.25px #ffffff;">Performance</div>
<div id="t_conf" class="t" style="left:265.80px;top:11.92px;font-size:19.00px;line-height:23px;letter-spacing:0.062px;word-spacing:0.00px;color:#ffffff;font-weight:normal;-webkit-text-stroke:0.25px #ffffff;">Configuration</div>
<div id="t_ext" class="t" style="left:419.60px;top:11.92px;font-size:19.00px;line-height:23px;letter-spacing:-0.429px;word-spacing:-0.95px;color:#ffffff;font-weight:normal;-webkit-text-stroke:0.25px #ffffff;">Extend Service</div>
<div id="t_appr" class="t" style="left:582.00px;top:11.92px;font-size:19.00px;line-height:23px;letter-spacing:-0.507px;word-spacing:0.00px;color:#ffffff;font-weight:normal;-webkit-text-stroke:0.25px #ffffff;">Approvals</div>
<div id="t_auto" class="t" style="left:703.80px;top:11.92px;font-size:19.00px;line-height:23px;letter-spacing:-0.127px;word-spacing:0.00px;color:#ffffff;font-weight:normal;-webkit-text-stroke:0.25px #ffffff;">Automation</div>
<div id="t_perm" class="t" style="left:838.80px;top:13.22px;font-size:19.00px;line-height:23px;letter-spacing:-1.476px;word-spacing:0.00px;color:#ffffff;font-weight:bold;">Permissions</div>
<div id="s1" class="t" style="left:38.20px;top:88.92px;font-size:19.00px;line-height:23px;letter-spacing:-0.154px;word-spacing:-0.95px;color:#5d6068;font-weight:normal;-webkit-text-stroke:0.25px #5d6068;">Performance Administrators</div>
<div id="s2" class="t" style="left:38.20px;top:144.72px;font-size:19.00px;line-height:23px;letter-spacing:-0.567px;word-spacing:-0.95px;color:#5d6068;font-weight:normal;-webkit-text-stroke:0.25px #5d6068;">Record Permissions</div>
<div id="s3" class="t" style="left:38.20px;top:200.92px;font-size:19.00px;line-height:23px;letter-spacing:-0.395px;word-spacing:-0.95px;color:#1f2126;font-weight:normal;-webkit-text-stroke:0.3px #1f2126;">Field Permissions</div>
<div id="s4" class="t" style="left:38.10px;top:256.22px;font-size:19.00px;line-height:23px;letter-spacing:-0.290px;word-spacing:-0.95px;color:#5d6068;font-weight:normal;-webkit-text-stroke:0.25px #5d6068;">Import and Export Permissions</div>
<div id="s5" class="t" style="left:38.80px;top:312.02px;font-size:19.00px;line-height:23px;letter-spacing:-0.449px;word-spacing:-0.95px;color:#5d6068;font-weight:normal;-webkit-text-stroke:0.25px #5d6068;">Tabular Section Permissions</div>
<div id="f_form" class="t" style="left:382.00px;top:86.82px;font-size:19.00px;line-height:23px;letter-spacing:-0.521px;word-spacing:0.00px;color:#1f2126;font-weight:normal;-webkit-text-stroke:0.25px #1f2126;">Form</div>
<div id="f_goals" class="t" style="left:447.60px;top:86.92px;font-size:19.00px;line-height:23px;letter-spacing:-0.947px;word-spacing:0.00px;color:#1f2126;font-weight:normal;-webkit-text-stroke:0.25px #1f2126;">Goals</div>
<div id="f_role" class="t" style="left:757.20px;top:86.82px;font-size:19.00px;line-height:23px;letter-spacing:-0.815px;word-spacing:0.00px;color:#1f2126;font-weight:normal;-webkit-text-stroke:0.25px #1f2126;">Role</div>
<div id="f_team" class="t" style="left:817.20px;top:86.92px;font-size:19.00px;line-height:23px;letter-spacing:-0.521px;word-spacing:-0.95px;color:#1f2126;font-weight:normal;-webkit-text-stroke:0.25px #1f2126;">Team member</div>
<div id="tab1" class="t" style="left:505.40px;top:171.00px;font-size:21.50px;line-height:26px;letter-spacing:-0.967px;word-spacing:-1.07px;color:#1f2126;font-weight:normal;-webkit-text-stroke:0.25px #1f2126;">No Data</div>
<div id="tab2" class="t" style="left:736.20px;top:171.00px;font-size:21.50px;line-height:26px;letter-spacing:-0.681px;word-spacing:-1.07px;color:#1f2126;font-weight:normal;-webkit-text-stroke:0.25px #1f2126;">My Data</div>
<div id="tab3" class="t" style="left:969.50px;top:171.00px;font-size:21.50px;line-height:26px;letter-spacing:-0.436px;word-spacing:-1.07px;color:#1f2126;font-weight:normal;-webkit-text-stroke:0.25px #1f2126;">Reportees&#39; Data</div>
<div id="tab4" class="t" style="left:1275.20px;top:171.00px;font-size:21.50px;line-height:26px;letter-spacing:-0.590px;word-spacing:-1.07px;color:#1f2126;font-weight:normal;-webkit-text-stroke:0.25px #1f2126;">Reportees + My Data</div>
<div id="tab5" class="t" style="left:1625.10px;top:171.00px;font-size:21.50px;line-height:26px;letter-spacing:-0.680px;word-spacing:-1.07px;color:#1f2126;font-weight:normal;-webkit-text-stroke:0.25px #1f2126;">All Data</div>
<div id="c_all" class="t" style="left:460.60px;top:273.12px;font-size:19.00px;line-height:23px;letter-spacing:-0.425px;word-spacing:-0.95px;color:#1f2126;font-weight:normal;-webkit-text-stroke:0.3px #1f2126;">All Select</div>
<div id="c_search" class="t" style="left:1412.00px;top:273.32px;font-size:19.00px;line-height:23px;letter-spacing:-0.526px;word-spacing:0.00px;color:#a3a3a3;font-weight:normal;-webkit-text-stroke:0.25px #a3a3a3;">Search</div>
<div id="c_goal" class="t" style="left:460.00px;top:347.82px;font-size:19.00px;line-height:23px;letter-spacing:-0.496px;word-spacing:-0.95px;color:#1f2126;font-weight:normal;-webkit-text-stroke:0.3px #1f2126;">Goal Details</div>
<div id="h_n1" class="t" style="left:457.60px;top:416.82px;font-size:19.00px;line-height:23px;letter-spacing:-0.577px;word-spacing:0.00px;color:#1f2126;font-weight:normal;-webkit-text-stroke:0.3px #1f2126;">Name</div>
<div id="h_v1" class="t" style="left:834.20px;top:416.82px;font-size:19.00px;line-height:23px;letter-spacing:-0.616px;word-spacing:0.00px;color:#1f2126;font-weight:normal;-webkit-text-stroke:0.3px #1f2126;">View</div>
<div id="h_e1" class="t" style="left:959.20px;top:416.82px;font-size:19.00px;line-height:23px;letter-spacing:-0.726px;word-spacing:0.00px;color:#1f2126;font-weight:normal;-webkit-text-stroke:0.3px #1f2126;">Edit</div>
<div id="h_n2" class="t" style="left:1156.00px;top:416.82px;font-size:19.00px;line-height:23px;letter-spacing:-0.444px;word-spacing:0.00px;color:#1f2126;font-weight:normal;-webkit-text-stroke:0.3px #1f2126;">Name</div>
<div id="h_v2" class="t" style="left:1533.60px;top:416.82px;font-size:19.00px;line-height:23px;letter-spacing:-0.750px;word-spacing:0.00px;color:#1f2126;font-weight:normal;-webkit-text-stroke:0.3px #1f2126;">View</div>
<div id="h_e2" class="t" style="left:1658.60px;top:416.82px;font-size:19.00px;line-height:23px;letter-spacing:-0.393px;word-spacing:0.00px;color:#1f2126;font-weight:normal;-webkit-text-stroke:0.3px #1f2126;">Edit</div>
<div id="r1" class="t" style="left:459.80px;top:469.56px;font-size:18.00px;line-height:22px;letter-spacing:-0.108px;word-spacing:-0.90px;color:#1f2126;font-weight:normal;-webkit-text-stroke:0.12px #1f2126;">Goal Name</div>
<div id="r2" class="t" style="left:459.80px;top:522.96px;font-size:18.00px;line-height:22px;letter-spacing:-0.152px;word-spacing:-0.90px;color:#1f2126;font-weight:normal;-webkit-text-stroke:0.12px #1f2126;">End Date</div>
<div id="r3" class="t" style="left:459.80px;top:576.56px;font-size:18.00px;line-height:22px;letter-spacing:0.380px;word-spacing:0.00px;color:#1f2126;font-weight:normal;-webkit-text-stroke:0.12px #1f2126;">Description</div>
<div id="r4a" class="t" style="left:459.80px;top:629.76px;font-size:18.00px;line-height:22px;letter-spacing:0.030px;word-spacing:-0.90px;color:#1f2126;font-weight:normal;-webkit-text-stroke:0.12px #1f2126;">Progress % (A goal is complete when</div>
<div id="r4b" class="t" style="left:459.80px;top:654.36px;font-size:18.00px;line-height:22px;letter-spacing:-0.081px;word-spacing:-0.90px;color:#1f2126;font-weight:normal;-webkit-text-stroke:0.12px #1f2126;">progress is 100%)</div>
<div id="r5" class="t" style="left:460.80px;top:707.86px;font-size:18.00px;line-height:22px;letter-spacing:-0.033px;word-spacing:-0.90px;color:#1f2126;font-weight:normal;-webkit-text-stroke:0.12px #1f2126;">Added By</div>
<div id="r6" class="t" style="left:458.80px;top:760.76px;font-size:18.00px;line-height:22px;letter-spacing:0.278px;word-spacing:-0.90px;color:#9b9b9b;font-weight:normal;-webkit-text-stroke:0.12px #9b9b9b;">Is Archived</div>
<div id="r7" class="t" style="left:459.80px;top:814.76px;font-size:18.00px;line-height:22px;letter-spacing:0.362px;word-spacing:-0.90px;color:#1f2126;font-weight:normal;-webkit-text-stroke:0.12px #1f2126;">Modified Time</div>
<div id="q1" class="t" style="left:1158.20px;top:469.56px;font-size:18.00px;line-height:22px;letter-spacing:-0.046px;word-spacing:-0.90px;color:#1f2126;font-weight:normal;-webkit-text-stroke:0.12px #1f2126;">Start Date</div>
<div id="q2" class="t" style="left:1158.20px;top:522.96px;font-size:18.00px;line-height:22px;letter-spacing:0.146px;word-spacing:0.00px;color:#1f2126;font-weight:normal;-webkit-text-stroke:0.12px #1f2126;">Priority</div>
<div id="q3" class="t" style="left:1159.20px;top:576.56px;font-size:18.00px;line-height:22px;letter-spacing:-0.184px;word-spacing:-0.90px;color:#1f2126;font-weight:normal;-webkit-text-stroke:0.12px #1f2126;">Weight %</div>
<div id="q4" class="t" style="left:1159.20px;top:629.76px;font-size:18.00px;line-height:22px;letter-spacing:-0.590px;word-spacing:0.00px;color:#1f2126;font-weight:normal;-webkit-text-stroke:0.12px #1f2126;">Job</div>
<div id="q5" class="t" style="left:1159.20px;top:683.66px;font-size:18.00px;line-height:22px;letter-spacing:0.219px;word-spacing:-0.90px;color:#1f2126;font-weight:normal;-webkit-text-stroke:0.12px #1f2126;">Added Time</div>
<div id="q6" class="t" style="left:1158.20px;top:737.06px;font-size:18.00px;line-height:22px;letter-spacing:0.275px;word-spacing:-0.90px;color:#1f2126;font-weight:normal;-webkit-text-stroke:0.12px #1f2126;">Modified By</div>
</body></html>
